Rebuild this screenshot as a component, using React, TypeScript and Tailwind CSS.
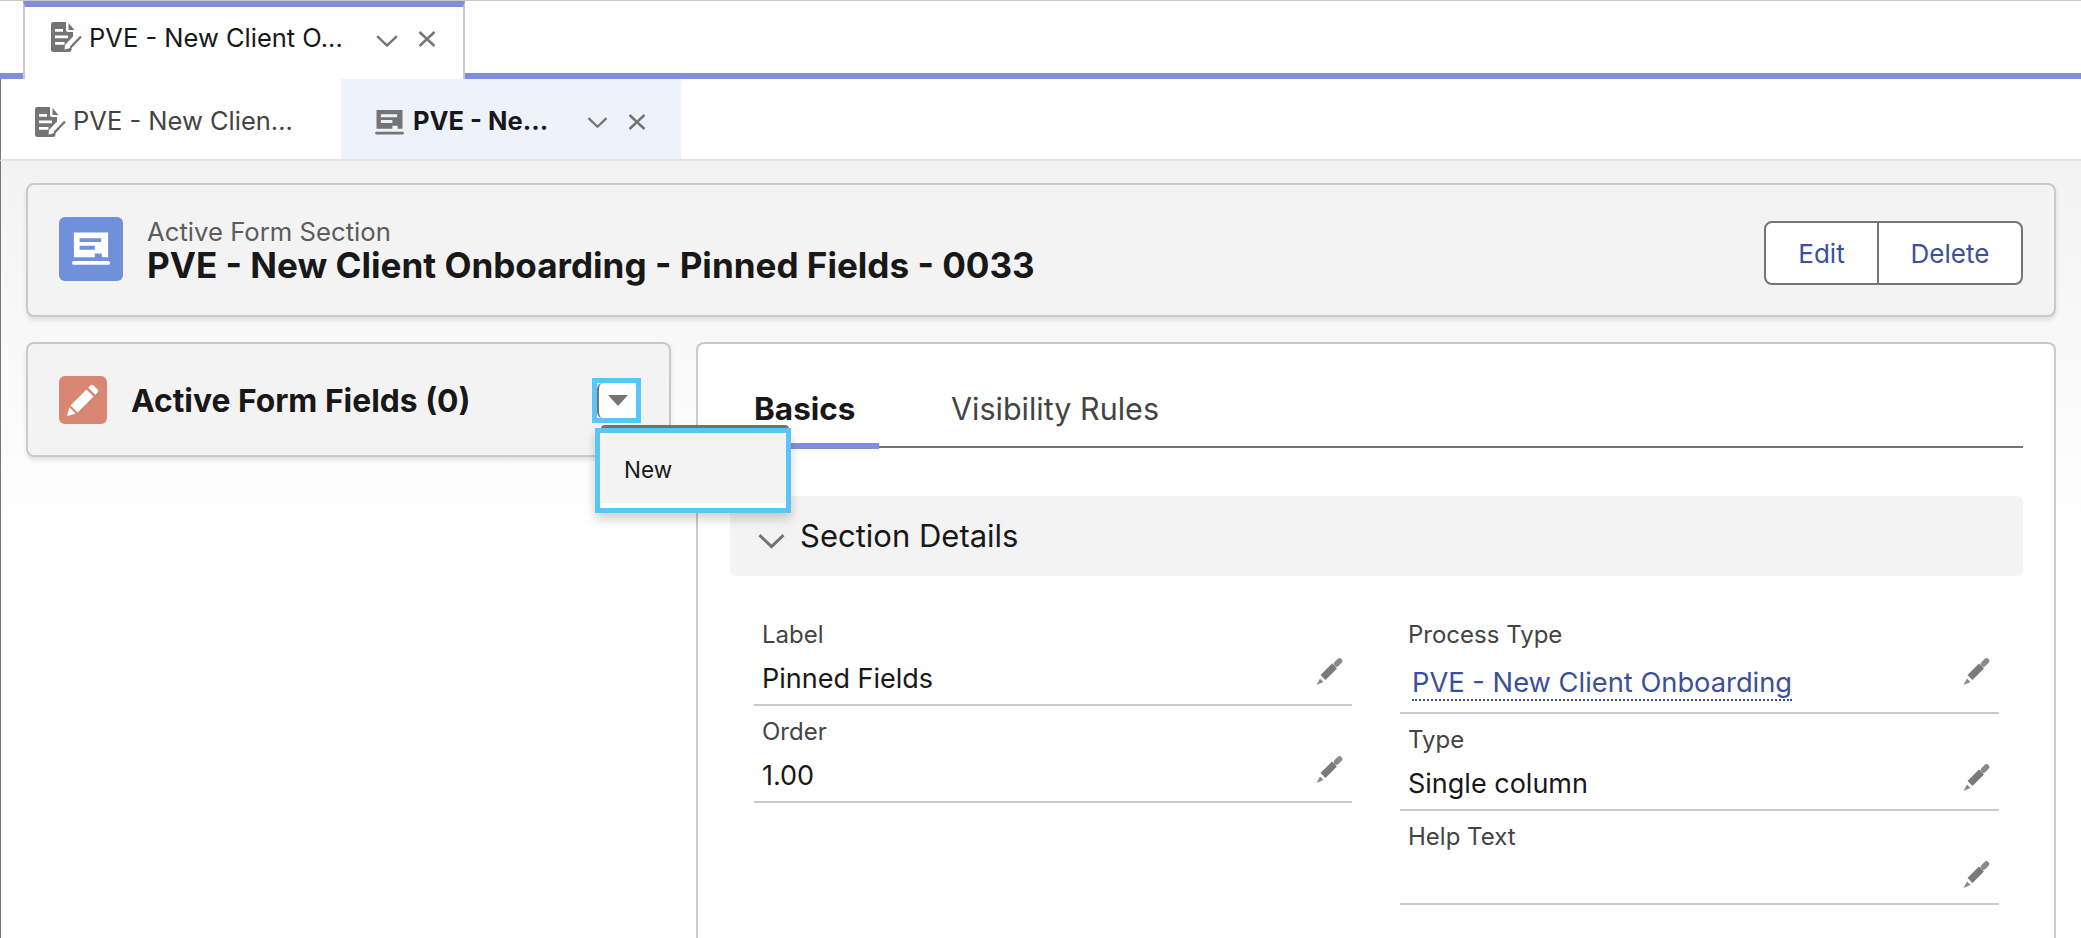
const font = "font-['Inter','Liberation_Sans',sans-serif]";

function DocEditIcon({ className }: { className: string }) {
  return (
    <svg viewBox="0 0 31 30" className={className}>
      <path
        d="M2.500 0H15V8a2 2 0 0 0 2 2H22V14.500L14 23L13.500 27.500L18 26.500L20.500 24V27.500A2.500 2.500 0 0 1 18 30H2.500A2.500 2.500 0 0 1 0 27.500V2.500A2.500 2.500 0 0 1 2.500 0Z"
        fill="#747474"
      />
      <path d="M17.500 1 23.500 8H17.500Z" fill="#747474" />
      <path d="M4 7h8v2.700H4ZM4 13.500h13v2.800H4ZM4 20h9.500v2.800H4Z" fill="#ffffff" />
      <path d="M19.500 25.500 30 14.500" stroke="#747474" strokeWidth="2.400" fill="none" />
    </svg>
  );
}

function FormIcon({ color, cut, className }: { color: string; cut: string; className: string }) {
  return (
    <svg viewBox="0 0 30 26" className={className}>
      <path d="M1.500 0H28.500V19.500H23.500V16.500H18V19.500H1.500Z" fill={color} />
      <path d="M6 4.500H23V7.500H6ZM6 10.500H18V13.500H6Z" fill={cut} />
      <rect x="0" y="22.500" width="30" height="3" rx="1.500" fill={color} />
    </svg>
  );
}

function Pencil({ color, className }: { color: string; className: string }) {
  return (
    <svg viewBox="0 0 28 28" className={className}>
      <path d="M19.800 2.200a2 2 0 0 1 2.800 0l3.200 3.200a2 2 0 0 1 0 2.800l-1.800 1.800-6-6Z" fill={color} />
      <path d="M16.500 5.500l6 6L9 25l-6-6Z" fill={color} />
      <path d="M2 20.500l5.500 5.500-6.500 1.800c-.6.100-1-.3-.8-.8Z" fill={color} />
    </svg>
  );
}

// the small edit pencil beside a field value: cap, shaft and tip with gaps between them
function EditPencil({ className }: { className: string }) {
  return (
    <svg viewBox="0 0 28 28" className={className}>
      <path d="M21.500 6 24.500 3" stroke="#8a8a8a" strokeWidth="5.500" strokeLinecap="round" fill="none" />
      <path d="M19.500 8 8 19.500" stroke="#7a7a7a" strokeWidth="7" fill="none" />
      <path d="M5 20.500 8.500 24 1.500 27Z" fill="#8a8a8a" />
    </svg>
  );
}

function Chevron({ className }: { className: string }) {
  return (
    <svg viewBox="0 0 22 12" className={className}>
      <path d="M1.200 1.200 11 10.600 20.800 1.200" stroke="#747474" strokeWidth="2.400" fill="none" />
    </svg>
  );
}

function Close({ className }: { className: string }) {
  return (
    <svg viewBox="0 0 18 16" className={className}>
      <path d="M1.500 1 16.500 15M16.500 1 1.500 15" stroke="#747474" strokeWidth="2.400" fill="none" />
    </svg>
  );
}

function Field({
  label,
  value,
  link,
  valueTop,
  pencilTop,
  className,
}: {
  label: string;
  value?: string;
  link?: boolean;
  valueTop: string;
  pencilTop: string;
  className: string;
}) {
  return (
    <div className={`flex flex-col border-b-2 border-[#c9c9c9] ${className}`}>
      <div className="pl-2 text-[24px] leading-[28px] text-[#444444]">{label}</div>
      <div className="flex flex-1 items-start justify-between pr-[9px] pl-2">
        {link ? (
          <span className={`${valueTop} ml-1 border-b-2 border-dotted border-[#3b4f9a] text-[27.300px] leading-[32px] text-[#3b4f9a]`}>
            {value}
          </span>
        ) : (
          <span className={`${valueTop} text-[27px] leading-[34px] text-[#181818]`}>{value}</span>
        )}
        <EditPencil className={`${pencilTop} h-7 w-7 shrink-0`} />
      </div>
    </div>
  );
}

export default function App() {
  return (
    <div className={`${font} flex h-[938px] w-[2081px] flex-col overflow-hidden bg-white`}>
      {/* workspace tab row */}
      <div className="h-[79px] shrink-0 border-t border-[#c9c9c9] bg-white">
        <div className="flex h-full flex-col">
          <div className="flex h-[72px] shrink-0">
            <div className="relative z-10 ml-[23px] flex h-[78px] w-[442px] items-start border-x-2 border-t-[6px] border-x-[#c9c9c9] border-t-[#7f8fde] bg-white">
              <DocEditIcon className="mt-[15px] ml-[26px] h-[30px] w-[31px] shrink-0" />
              <span className="mt-[16px] ml-[7px] w-[261px] text-[25.500px] leading-[30px] whitespace-nowrap text-[#181818]">
                PVE - New Client O...
              </span>
              <Chevron className="mt-[28px] ml-[26px] h-[12px] w-[22px] shrink-0" />
              <Close className="mt-[24px] ml-[20px] h-[16px] w-[18px] shrink-0" />
            </div>
          </div>
          <div className="h-[6px] bg-[#7f8fde]" />
        </div>
      </div>

      {/* sub tab row */}
      <div className="flex h-[82px] shrink-0 border-b-2 border-l border-b-[#e5e5e5] border-l-[#777777] bg-white">
        <div className="flex w-[340px] items-start">
          <DocEditIcon className="mt-[28px] ml-[34px] h-[30px] w-[31px] shrink-0" />
          <span className="mt-[27px] ml-[7px] text-[25.500px] leading-[30px] whitespace-nowrap text-[#444444]">
            PVE - New Clien...
          </span>
        </div>
        <div className="flex w-[340px] items-start bg-[#eef2fb]">
          <FormIcon color="#747474" cut="#eef2fb" className="mt-[31px] ml-[34px] h-[25px] w-[29px] shrink-0" />
          <span className="mt-[27px] ml-[9px] w-[137px] text-[25.500px] leading-[30px] font-bold whitespace-nowrap text-[#181818]">
            PVE - Ne...
          </span>
          <Chevron className="mt-[38px] ml-[37px] h-[11px] w-[21px] shrink-0" />
          <Close className="mt-[35px] ml-[20px] h-[16px] w-[18px] shrink-0" />
        </div>
      </div>

      {/* page body */}
      <div className="flex flex-1 flex-col gap-[25px] border-l border-[#777777] bg-[linear-gradient(#f3f3f3_0,#ffffff_400px)] pt-[22px] pr-[25px] pl-[25px]">
        <div className="flex h-[134px] shrink-0 items-center justify-between rounded-lg border-2 border-[#c9c9c9] bg-[#f3f3f3] pr-[31px] pl-[31px] shadow-[0_3px_4px_rgba(0,0,0,0.1)]">
          <div className="flex items-center">
            <div className="-mt-[2px] flex h-16 w-16 items-center justify-center rounded-md bg-[#7190dc]">
              <FormIcon color="#ffffff" cut="#7190dc" className="h-[34px] w-[38px]" />
            </div>
            <div className="ml-[24px]">
              <div className="text-[25.700px] leading-[30px] text-[#5c5c5c]">Active Form Section</div>
              <div className="text-[35.100px] leading-[36px] font-bold text-[#181818]">
                PVE - New Client Onboarding - Pinned Fields - 0033
              </div>
            </div>
          </div>
          <div className="mt-[6px] flex h-16 w-[259px] rounded-lg border-2 border-[#747474] bg-white text-[26px] text-[#3b4f9a]">
            <button className="w-[113px] border-r-2 border-[#747474]">Edit</button>
            <button className="flex-1">Delete</button>
          </div>
        </div>

        <div className="flex min-h-0 flex-1 gap-[25px]">
          <div className="relative h-[115px] w-[645px] shrink-0 rounded-lg border-2 border-[#c9c9c9] bg-[#f3f3f3] shadow-[0_3px_4px_rgba(0,0,0,0.1)]">
            <div className="flex h-full items-center pl-[31px]">
              <div className="flex h-12 w-12 items-center justify-center rounded-md bg-[#d98674]">
                <Pencil color="#ffffff" className="h-[33px] w-[33px]" />
              </div>
              <div className="mt-[2px] ml-[24px] text-[31.800px] font-bold text-[#181818]">Active Form Fields (0)</div>
            </div>
            {/* focused dropdown trigger and its menu */}
            <div className="absolute top-[34px] left-[564px] h-[45px] w-[49px] border-[5px] border-[#5bc4f8] bg-[#f3f3f3]">
              <div className="flex h-full w-full items-center justify-center rounded-md border-l-2 border-[#747474] bg-white">
                <div className="h-0 w-0 border-x-[10px] border-t-[11px] border-x-transparent border-t-[#747474]" />
              </div>
            </div>
            <div className="absolute top-[81px] left-[573px] h-[4px] w-[188px] rounded-t-md bg-[#747474]" />
            <div className="absolute top-[84px] left-[567px] z-10 h-[85px] w-[196px] border-[5px] border-[#5bc4f8] bg-white py-[2px] shadow-[0_6px_10px_rgba(0,0,0,0.18)]">
              <div className="flex h-[68px] items-center bg-[#f3f3f3] pt-[2px] pl-6 text-[22.500px] text-[#181818]">New</div>
            </div>
          </div>

          <div className="flex-1 rounded-t-lg border-2 border-b-0 border-[#c9c9c9] bg-white pr-[31px] pl-[54px]">
            <div className="mt-[41px] flex h-[63px] border-b-2 border-[#747474]">
              <div className="-mb-[2px] h-[64px] w-[127px] border-b-[6px] border-[#7f8fde] pt-[5px] pl-[2px] text-[31.500px] leading-[38px] font-bold text-[#181818]">
                Basics
              </div>
              <div className="ml-[72px] pt-[5px] text-[30.500px] leading-[38px] text-[#444444]">Visibility Rules</div>
            </div>

            <div className="mt-[48px] -ml-[22px] flex h-[80px] items-center rounded-md bg-[#f3f3f3] pl-7">
              <Chevron className="mt-[10px] h-[16px] w-[27px]" />
              <span className="mt-[1px] ml-[15px] text-[31px] text-[#181818]">Section Details</span>
            </div>

            <div className="mt-[45px] flex gap-[48px]">
              <div className="flex w-[600px] flex-col gap-[12px] pl-[2px]">
                <Field label="Label" value="Pinned Fields" valueTop="mt-[13px]" pencilTop="mt-[9px]" className="h-[85px]" />
                <Field label="Order" value="1.00" valueTop="mt-[13px]" pencilTop="mt-[10px]" className="h-[85px]" />
              </div>
              <div className="flex w-[599px] flex-col gap-[12px]">
                <Field label="Process Type" value="PVE - New Client Onboarding" link valueTop="mt-[18px]" pencilTop="mt-[9px]" className="h-[93px]" />
                <Field label="Type" value="Single column" valueTop="mt-[13px]" pencilTop="mt-[10px]" className="h-[85px]" />
                <Field label="Help Text" valueTop="mt-[12px]" pencilTop="mt-[10px]" className="h-[82px]" />
              </div>
            </div>
          </div>
        </div>
      </div>
    </div>
  );
}
